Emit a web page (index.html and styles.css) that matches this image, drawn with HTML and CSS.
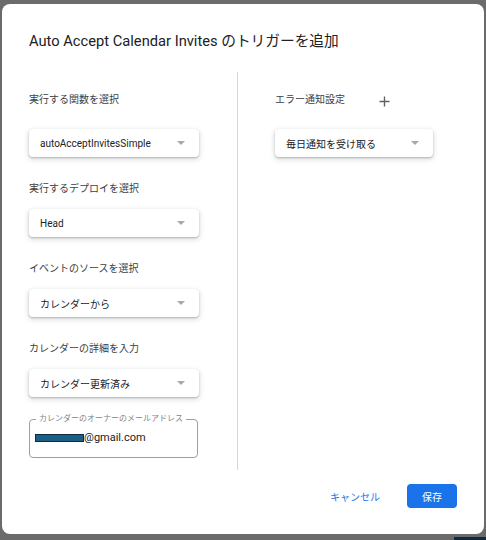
FILE: index.html
```html
<!DOCTYPE html>
<html lang="ja">
<head>
<meta charset="utf-8">
<title>トリガーを追加</title>
<link rel="stylesheet" href="styles.css">
</head>
<body>
<div class="dialog">
  <h1 class="title">Auto Accept Calendar Invites のトリガーを追加</h1>
  <div class="columns">
    <div class="col col-left">
      <div class="field field-first">
        <div class="label">実行する関数を選択</div>
        <div class="select"><span>autoAcceptInvitesSimple</span><i class="arrow"></i></div>
      </div>
      <div class="field">
        <div class="label">実行するデプロイを選択</div>
        <div class="select"><span>Head</span><i class="arrow"></i></div>
      </div>
      <div class="field">
        <div class="label">イベントのソースを選択</div>
        <div class="select"><span>カレンダーから</span><i class="arrow"></i></div>
      </div>
      <div class="field">
        <div class="label">カレンダーの詳細を入力</div>
        <div class="select"><span>カレンダー更新済み</span><i class="arrow"></i></div>
      </div>
      <fieldset class="outlined">
        <legend>カレンダーのオーナーのメールアドレス</legend>
        <div class="value"><span class="redact"></span>@gmail.com</div>
      </fieldset>
    </div>
    <div class="col col-right">
      <div class="field field-first">
        <div class="label-row">
          <div class="label">エラー通知設定</div>
          <svg class="plus" width="11" height="11" viewBox="0 0 11 11"><path d="M5.5 0.5v10M0.5 5.5h10" stroke="#5f6368" stroke-width="1.4" fill="none"/></svg>
        </div>
        <div class="select select-narrow"><span>毎日通知を受け取る</span><i class="arrow"></i></div>
      </div>
    </div>
  </div>
  <div class="footer">
    <button class="btn btn-text">キャンセル</button>
    <button class="btn btn-primary">保存</button>
  </div>
</div>
</body>
</html>
```

FILE: styles.css
```css
html {
  background: #6b6b6b linear-gradient(#0e2b44, #0e2b44) no-repeat right bottom / 32px 3px;
  height: 100%;
}
body {
  margin: 0;
  font-family: Roboto, "Noto Sans CJK JP", sans-serif;
  color: #202124;
}
.dialog {
  box-sizing: border-box;
  margin: 4px 0 0 2px;
  width: 482px;
  height: 530px;
  background: #fff;
  border-radius: 8px;
  padding: 27px 27px 0 27px;
  display: flex;
  flex-direction: column;
}
.title {
  margin: 0;
  font-size: 14.7px;
  font-weight: 400;
  line-height: 20px;
  color: #202124;
}
.columns {
  margin-top: 21px;
  height: 398px;
  display: flex;
}
.col-left {
  width: 208px;
  padding-top: 20px;
  box-sizing: border-box;
}
.col-right {
  flex: 1;
  border-left: 1px solid #d6d6d6;
  padding-left: 37px;
  padding-top: 20px;
}
.field {
  margin-top: 24px;
}
.field-first {
  margin-top: 0;
}
.label {
  font-size: 10px;
  line-height: 16px;
  height: 16px;
  color: #3c4043;
  margin-bottom: 12px;
}
.field-first .label {
  margin-bottom: 21px;
}
.label-row {
  display: flex;
  align-items: flex-start;
}
.plus {
  margin-left: 34px;
  margin-top: 4px;
}
.select {
  box-sizing: border-box;
  width: 170px;
  height: 28px;
  border-radius: 4px;
  background: #fff;
  box-shadow: 0 1px 2px rgba(60, 64, 67, 0.3), 0 2px 5px 1px rgba(60, 64, 67, 0.15);
  display: flex;
  align-items: center;
  justify-content: space-between;
  padding: 0 14px 0 11px;
  font-size: 10px;
  color: #202124;
}
.select-narrow {
  width: 158px;
}
.arrow {
  width: 0;
  height: 0;
  border-left: 4px solid transparent;
  border-right: 4px solid transparent;
  border-top: 4px solid #a8a8a8;
}
.outlined {
  box-sizing: border-box;
  width: 169px;
  margin: 17px 0 0 0;
  padding: 0 5px 11px 5px;
  border: 1px solid #9aa0a6;
  border-radius: 4px;
}
.outlined legend {
  font-size: 8px;
  line-height: 10px;
  color: #80868b;
  padding: 0 3px;
  margin-left: 1px;
}
.value {
  margin-top: 6px;
  font-size: 11px;
  line-height: 16px;
  color: #202124;
  display: flex;
  align-items: center;
}
.redact {
  display: inline-block;
  box-sizing: border-box;
  width: 49px;
  height: 8px;
  background: #1b5f86;
  border: 1px solid #0c2a40;
}
.footer {
  margin-top: 14px;
  display: flex;
  justify-content: flex-end;
  align-items: center;
}
.btn {
  font-family: Roboto, "Noto Sans CJK JP", sans-serif;
  font-size: 10px;
  height: 24px;
  border: none;
  border-radius: 4px;
  cursor: pointer;
}
.btn-text {
  background: none;
  color: #1a73e8;
  padding: 0 12px;
  margin-right: 15px;
}
.btn-primary {
  background: #1a73e8;
  color: #fff;
  width: 50px;
  padding: 0;
}
```
